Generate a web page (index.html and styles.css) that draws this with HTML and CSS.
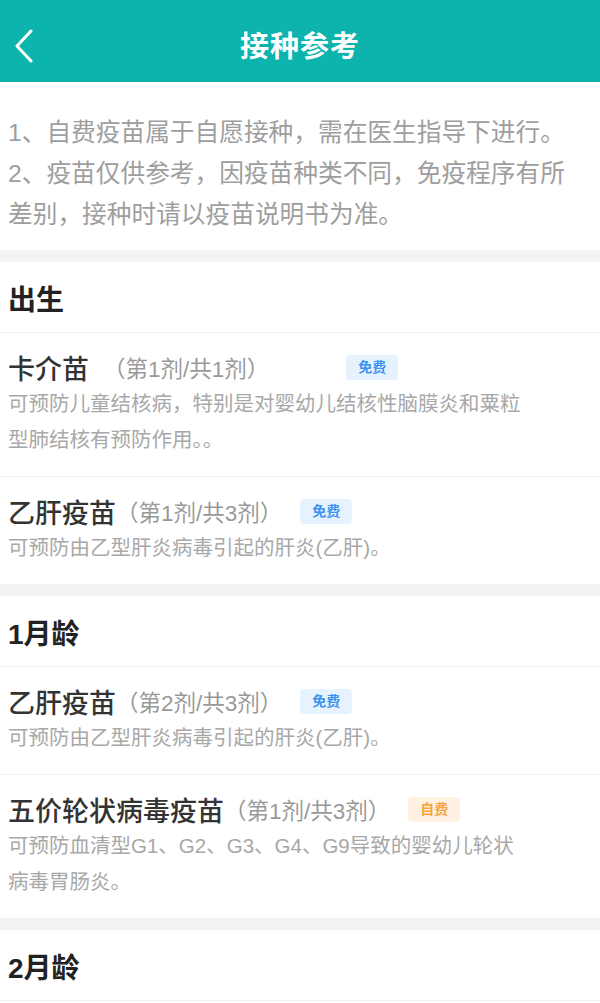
FILE: index.html
```html
<!DOCTYPE html>
<html>
<head>
    <meta charset="utf-8">
    <title>接种参考</title>
    <link rel="stylesheet" href="styles.css">
</head>
<body>
    <div class="header">
        <div class="back-btn">
            <svg width="22" height="34" viewBox="0 0 22 34">
                <polyline points="18,2 4,17 18,32" fill="none" stroke="#ffffff" stroke-width="3" stroke-linecap="round" stroke-linejoin="round"/>
            </svg>
        </div>
        <div class="header-title">接种参考</div>
    </div>

    <div class="intro">
        <p>1、自费疫苗属于自愿接种，需在医生指导下进行。</p>
        <p>2、疫苗仅供参考，因疫苗种类不同，免疫程序有所差别，接种时请以疫苗说明书为准。</p>
    </div>

    <div class="gap"></div>

    <div class="section">
        <div class="section-title">出生</div>
        <div class="vaccine">
            <div class="vaccine-head">
                <span class="vaccine-name">卡介苗</span>
                <span class="vaccine-dose dose-wide">（第1剂/共1剂）</span>
                <span class="badge badge-free">免费</span>
            </div>
            <div class="vaccine-desc">可预防儿童结核病，特别是对婴幼儿结核性脑膜炎和粟粒型肺结核有预防作用。。</div>
        </div>
        <div class="vaccine">
            <div class="vaccine-head">
                <span class="vaccine-name">乙肝疫苗</span>
                <span class="vaccine-dose">（第1剂/共3剂）</span>
                <span class="badge badge-free">免费</span>
            </div>
            <div class="vaccine-desc">可预防由乙型肝炎病毒引起的肝炎(乙肝)。</div>
        </div>
    </div>

    <div class="gap"></div>

    <div class="section">
        <div class="section-title">1月龄</div>
        <div class="vaccine">
            <div class="vaccine-head">
                <span class="vaccine-name">乙肝疫苗</span>
                <span class="vaccine-dose">（第2剂/共3剂）</span>
                <span class="badge badge-free">免费</span>
            </div>
            <div class="vaccine-desc">可预防由乙型肝炎病毒引起的肝炎(乙肝)。</div>
        </div>
        <div class="vaccine">
            <div class="vaccine-head">
                <span class="vaccine-name">五价轮状病毒疫苗</span>
                <span class="vaccine-dose">（第1剂/共3剂）</span>
                <span class="badge badge-paid">自费</span>
            </div>
            <div class="vaccine-desc">可预防血清型G1、G2、G3、G4、G9导致的婴幼儿轮状病毒胃肠炎。</div>
        </div>
    </div>

    <div class="gap"></div>

    <div class="section">
        <div class="section-title">2月龄</div>
    </div>
</body>
</html>
```

FILE: styles.css
```css
body {
    margin: 0;
    padding: 0;
    font-family: "Liberation Sans", "Noto Sans CJK SC", sans-serif;
    background-color: #ffffff;
    color: #333333;
}
.header {
    height: 82px;
    background-color: #0db4ae;
    display: flex;
    align-items: center;
    justify-content: center;
    position: relative;
}
.back-btn {
    position: absolute;
    left: 13px;
    top: 29px;
    width: 22px;
    height: 34px;
}
.back-btn svg {
    display: block;
}
.header-title {
    padding-top: 6px;
    color: #ffffff;
    font-size: 29px;
    font-weight: bold;
    letter-spacing: 1px;
}
.intro {
    padding: 30px 14px 15px 8px;
    height: 123px;
}
.intro p {
    margin: 0;
    font-size: 24.7px;
    line-height: 41px;
    color: #9e9e9e;
}
.gap {
    height: 12px;
    background-color: #f3f3f3;
}
.section-title {
    padding: 19px 8px 11px;
    line-height: 40px;
    font-size: 28px;
    font-weight: bold;
    color: #222222;
    border-bottom: 1px solid #f0f0f0;
}
.vaccine {
    padding: 16px 8px 18px;
    border-bottom: 1px solid #f0f0f0;
}
.section .vaccine:last-child {
    border-bottom: none;
}
.vaccine-head {
    display: flex;
    align-items: center;
    height: 36px;
}
.vaccine-name {
    font-size: 27px;
    font-weight: 500;
    color: #333333;
}
.vaccine-dose {
    font-size: 22.5px;
    color: #999999;
    margin-right: 18px;
}
.dose-wide {
    margin-left: 14px;
    margin-right: 77px;
}
.badge {
    display: inline-block;
    width: 52px;
    height: 25px;
    line-height: 25px;
    text-align: center;
    font-size: 14px;
    font-weight: bold;
    border-radius: 4px;
}
.badge-free {
    background-color: #e6f2fe;
    color: #3d93f0;
}
.badge-paid {
    background-color: #fff1e2;
    color: #f6a441;
}
.vaccine-desc {
    margin-top: 1px;
    max-width: 522px;
    font-size: 20.5px;
    line-height: 36px;
    color: #a8a8a8;
}
```
